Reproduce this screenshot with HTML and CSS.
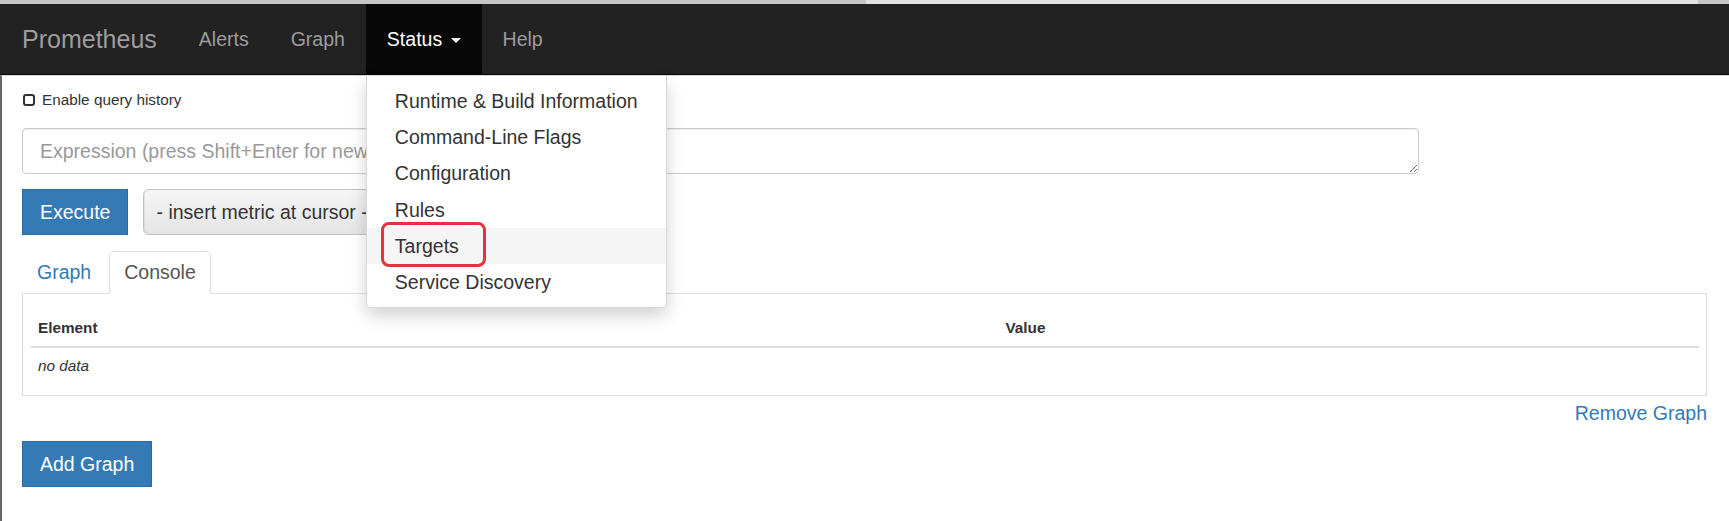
FILE: index.html
```html
<!DOCTYPE html>
<html lang="en">
<head>
<meta charset="utf-8">
<title>Prometheus Time Series Collection and Processing Server</title>
<link rel="stylesheet" href="styles.css">
</head>
<body>
<div class="chrome"><div class="seg seg-a"></div><div class="seg seg-b"></div><div class="seg seg-c"></div></div>
<nav class="navbar">
  <a class="brand" href="#">Prometheus</a>
  <ul class="nav">
    <li class="nav-item"><a class="nav-link" href="#">Alerts</a></li>
    <li class="nav-item"><a class="nav-link" href="#">Graph</a></li>
    <li class="nav-item open">
      <a class="nav-link" href="#">Status <span class="caret"></span></a>
      <ul class="dropdown-menu">
        <li><a href="#">Runtime &amp; Build Information</a></li>
        <li><a href="#">Command-Line Flags</a></li>
        <li><a href="#">Configuration</a></li>
        <li><a href="#">Rules</a></li>
        <li class="hover"><a href="#">Targets</a><span class="annot"></span></li>
        <li><a href="#">Service Discovery</a></li>
      </ul>
    </li>
    <li class="nav-item"><a class="nav-link" href="#">Help</a></li>
  </ul>
</nav>
<main class="page">
  <div class="history">
    <span class="checkbox"></span>
    <label>Enable query history</label>
  </div>
  <div class="graph">
    <textarea class="expr" placeholder="Expression (press Shift+Enter for newlines)"></textarea>
    <div class="controls">
      <button class="btn">Execute</button>
      <div class="select">- insert metric at cursor -</div>
    </div>
    <ul class="tabs">
      <li><a href="#">Graph</a></li>
      <li class="active"><a href="#">Console</a></li>
    </ul>
    <div class="tab-panel">
      <table class="table">
        <thead>
          <tr><th class="col-el">Element</th><th>Value</th></tr>
        </thead>
        <tbody>
          <tr><td colspan="2"><i>no data</i></td></tr>
        </tbody>
      </table>
    </div>
    <div class="remove-row"><a href="#">Remove Graph</a></div>
  </div>
  <button class="btn">Add Graph</button>
</main>
</body>
</html>
```
FILE: styles.css
```css
* { box-sizing: border-box; }
html, body { margin: 0; padding: 0; }
body {
  font-family: "Liberation Sans", Arial, sans-serif;
  font-size: 19.5px;
  color: #333;
  background: #fff;
  width: 1729px;
  height: 521px;
  overflow: hidden;
}
a { text-decoration: none; }

.chrome { display: flex; height: 4px; }
.seg-a { width: 866px; background: #c6c6c6; }
.seg-b { width: 832px; background: #e2e2e2; }
.seg-c { flex: 1; background: #c6c6c6; }

.navbar {
  display: flex;
  height: 71px;
  background: #222;
  border-bottom: 1px solid #080808;
  padding-left: 1px;
}
.brand {
  padding: 0 21px;
  font-size: 25px;
  line-height: 70px;
  color: #9d9d9d;
}
.nav { display: flex; list-style: none; margin: 0; padding: 0; }
.nav-item { position: relative; }
.nav-link {
  display: block;
  padding: 21px 21px 21px;
  line-height: 28px;
  color: #9d9d9d;
}
.nav-item.open > .nav-link { background: #080808; color: #fff; }
.caret {
  display: inline-block;
  width: 0; height: 0;
  margin-left: 3px;
  vertical-align: middle;
  border-top: 5.5px solid;
  border-left: 5.5px solid transparent;
  border-right: 5.5px solid transparent;
}

.dropdown-menu {
  position: absolute;
  top: 100%;
  left: 0;
  margin: 1px 0 0;
  padding: 7px 0;
  list-style: none;
  background: #fff;
  border: 1px solid rgba(0,0,0,.15);
  border-radius: 0 0 5px 5px;
  box-shadow: 0 8px 17px rgba(0,0,0,.175);
  z-index: 10;
}
.dropdown-menu li { position: relative; }
.dropdown-menu a {
  display: block;
  padding: 4px 28px;
  line-height: 28.2px;
  white-space: nowrap;
  color: #333;
}
.dropdown-menu li.hover a { background: #f5f5f5; }
.annot {
  position: absolute;
  left: 14px;
  top: -6px;
  width: 105px;
  height: 45px;
  border: 3px solid #e5323f;
  border-radius: 8px;
}

.page {
  border-top: 1px solid #d8d8d8;
  border-left: 2px solid #666;
  padding: 0 22px 0 20px;
  height: 446px;
}
.history {
  display: flex;
  align-items: center;
  margin-top: 13px;
  height: 22px;
}
.checkbox {
  width: 12px; height: 12px;
  margin-left: 1px;
  margin-right: 7px;
  border: 2px solid #333;
  border-radius: 3px;
}
.history label { font-size: 15.3px; line-height: 22px; color: #333; }

.expr {
  display: block;
  width: 1397px;
  height: 46px;
  margin-top: 17px;
  padding: 8px 17px;
  font-family: inherit;
  font-size: 19.5px;
  line-height: 28px;
  color: #555;
  border: 1px solid #ccc;
  border-radius: 4px;
  box-shadow: inset 0 1px 1px rgba(0,0,0,.075);
  resize: vertical;
}
.expr::placeholder { color: #999; }

.controls { display: flex; gap: 15px; margin-top: 15px; }
.btn {
  display: block;
  height: 46px;
  padding: 8px 17px;
  font-family: inherit;
  font-size: 19.5px;
  line-height: 28px;
  color: #fff;
  background: #337ab7;
  border: 1px solid #2e6da4;
  border-radius: 0;
}
.select {
  width: 420px;
  height: 46px;
  padding: 8px 12px;
  line-height: 28px;
  color: #333;
  white-space: nowrap;
  overflow: hidden;
  background: linear-gradient(#f6f6f6, #e4e4e4);
  border: 1px solid #c2c2c2;
  border-radius: 6px;
  box-shadow: inset 1px 0 1px rgba(0,0,0,.06);
}

.tabs {
  display: flex;
  list-style: none;
  margin: 16px 0 0;
  padding: 0;
  border-bottom: 1px solid #ddd;
}
.tabs li { margin-bottom: -1px; margin-right: 3px; }
.tabs a {
  display: block;
  padding: 6px 14px 7px;
  line-height: 28px;
  color: #337ab7;
  border: 1px solid transparent;
  border-radius: 5px 5px 0 0;
}
.tabs li.active a {
  color: #555;
  background: #fff;
  border-color: #ddd #ddd transparent;
}

.tab-panel {
  border: 1px solid #ddd;
  border-top: 0;
  padding: 16px 7px 11px 8px;
}
.table {
  width: 100%;
  border-collapse: collapse;
  font-size: 15.3px;
  line-height: 22px;
}
.table th, .table td { padding: 7px; text-align: left; }
.table th { font-weight: bold; border-bottom: 2px solid #ddd; }
.table td { border-top: 1px solid #ddd; }
.col-el { width: 58%; }

.remove-row { text-align: right; margin-top: 3px; line-height: 28px; }
.remove-row a { color: #337ab7; }

.page > .btn { margin-top: 14px; }
```
